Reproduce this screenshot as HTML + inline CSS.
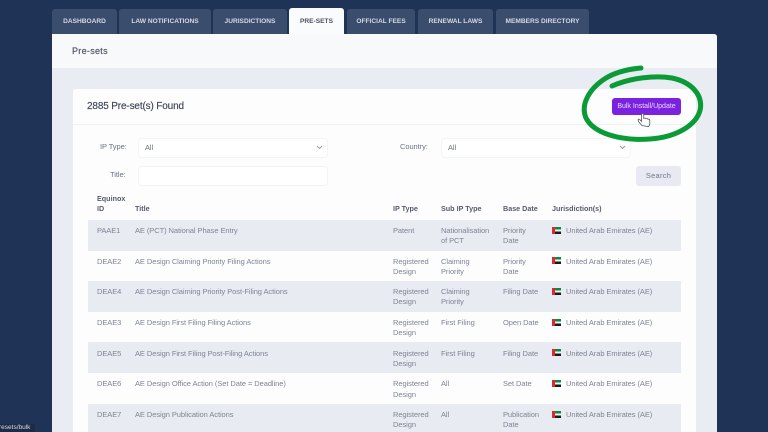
<!DOCTYPE html>
<html><head><meta charset="utf-8"><style>
html,body{margin:0;padding:0}
body{width:768px;height:432px;overflow:hidden;background:#1f3357;position:relative;font-family:"Liberation Sans",sans-serif}
#w{position:absolute;left:0;top:0;width:768px;height:432px;filter:blur(.25px)}
.a{position:absolute;white-space:nowrap}
.tab{position:absolute;top:9px;height:25px;background:#3a4d6d;border-radius:3px 3px 0 0;color:#d4d9e2;font-weight:700;font-size:6.6px;line-height:25px;text-align:center}
.t{position:absolute;white-space:nowrap;font-size:7.5px;line-height:10px;color:#7d8494;letter-spacing:-.07px;margin-top:1px}
.h{position:absolute;white-space:nowrap;font-size:7.2px;line-height:10px;color:#565c6e;font-weight:700;margin-top:1px}
.r{position:absolute;left:88px;width:593px;background:#e9ebf2}
.f{position:absolute;left:552px;width:9px;height:7px;background:linear-gradient(#0a8a40 0 33%,#f5f5f5 33% 66%,#1a1a1a 66%)}
.f:before{content:"";position:absolute;left:0;top:0;width:3px;height:7px;background:#e0262e}
.inp{position:absolute;height:18px;border:1px solid #f3f4f7;border-radius:4px;background:#fff}
</style></head><body><div id="w">
<div class="tab" style="left:52px;width:65px">DASHBOARD</div>
<div class="tab" style="left:119px;width:92px">LAW NOTIFICATIONS</div>
<div class="tab" style="left:213px;width:74px">JURISDICTIONS</div>
<div class="tab" style="left:289px;width:55px;background:#fafbfc;color:#4b5163;top:8px;height:26px;line-height:27px">PRE-SETS</div>
<div class="tab" style="left:347px;width:68px">OFFICIAL FEES</div>
<div class="tab" style="left:418px;width:75px">RENEWAL LAWS</div>
<div class="tab" style="left:496px;width:93px">MEMBERS DIRECTORY</div>

<div class="a" style="left:52px;top:34px;width:665px;height:398px;background:#eaecf3;border-radius:0 3px 0 0"></div>
<div class="a" style="left:52px;top:34px;width:665px;height:34px;background:#f8f9fb;border-radius:0 3px 0 0"></div>
<div class="a" style="left:72px;top:46px;font-size:9px;line-height:10px;color:#4e5466;font-weight:400;letter-spacing:.3px;-webkit-text-stroke:.15px #4e5466">Pre-sets</div>
<div class="a" style="left:73px;top:89px;width:623px;height:343px;background:#fdfdfe;border-radius:3px 3px 0 0"></div>
<div class="a" style="left:73px;top:124px;width:623px;height:1px;background:#f0f1f5"></div>
<div class="a" style="left:87px;top:101px;font-size:10px;line-height:12px;color:#3f4557;letter-spacing:-.15px;-webkit-text-stroke:.15px #3f4557">2885 Pre-set(s) Found</div>
<div class="a" style="left:612px;top:98px;width:69px;height:17px;background:#7a22e0;border-radius:3px;color:#e9dcfb;font-size:7px;line-height:17px;text-align:center">Bulk Install/Update</div>

<div class="t" style="left:100px;top:141px;color:#6d7383">IP Type:</div>
<div class="inp" style="left:138px;top:138px;width:188px"></div>
<div class="t" style="left:145px;top:142px;color:#6d7383">All</div>
<svg class="a" style="left:316px;top:145px" width="7" height="5" viewBox="0 0 7 5"><path d="M1 1l2.5 2.5L6 1" fill="none" stroke="#9a9fab" stroke-width="1"/></svg>
<div class="t" style="left:400px;top:141px;color:#6d7383">Country:</div>
<div class="inp" style="left:441px;top:138px;width:188px"></div>
<div class="t" style="left:448px;top:142px;color:#6d7383">All</div>
<svg class="a" style="left:619px;top:145px" width="7" height="5" viewBox="0 0 7 5"><path d="M1 1l2.5 2.5L6 1" fill="none" stroke="#9a9fab" stroke-width="1"/></svg>
<div class="t" style="left:110px;top:169px;color:#6d7383">Title:</div>
<div class="inp" style="left:138px;top:166px;width:188px"></div>
<div class="a" style="left:636px;top:166px;width:45px;height:20px;background:#e8e9f2;border-radius:3px;color:#71748c;font-size:7.5px;line-height:20px;text-align:center;letter-spacing:.25px">Search</div>

<div class="h" style="left:97px;top:193px">Equinox</div>
<div class="h" style="left:97px;top:203px">ID</div>
<div class="h" style="left:135px;top:203px">Title</div>
<div class="h" style="left:393px;top:203px">IP Type</div>
<div class="h" style="left:441px;top:203px">Sub IP Type</div>
<div class="h" style="left:503px;top:203px">Base Date</div>
<div class="h" style="left:552px;top:203px">Jurisdiction(s)</div>

<div class="r" style="top:220px;height:31px"></div>
<div class="r" style="top:281px;height:31px"></div>
<div class="r" style="top:342px;height:31px"></div>
<div class="r" style="top:404px;height:28px"></div>

<div class="t" style="left:97px;top:225px">PAAE1</div><div class="t" style="left:135px;top:225px">AE (PCT) National Phase Entry</div><div class="t" style="left:393px;top:225px">Patent</div><div class="t" style="left:441px;top:225px">Nationalisation</div><div class="t" style="left:441px;top:235px">of PCT</div><div class="t" style="left:503px;top:225px">Priority</div><div class="t" style="left:503px;top:235px">Date</div><div class="f" style="top:227px"></div><div class="t" style="left:566px;top:225px">United Arab Emirates (AE)</div>

<div class="t" style="left:97px;top:256px">DEAE2</div><div class="t" style="left:135px;top:256px">AE Design Claiming Priority Filing Actions</div><div class="t" style="left:393px;top:256px">Registered</div><div class="t" style="left:393px;top:266px">Design</div><div class="t" style="left:441px;top:256px">Claiming</div><div class="t" style="left:441px;top:266px">Priority</div><div class="t" style="left:503px;top:256px">Priority</div><div class="t" style="left:503px;top:266px">Date</div><div class="f" style="top:257px"></div><div class="t" style="left:566px;top:256px">United Arab Emirates (AE)</div>

<div class="t" style="left:97px;top:286px">DEAE4</div><div class="t" style="left:135px;top:286px">AE Design Claiming Priority Post-Filing Actions</div><div class="t" style="left:393px;top:286px">Registered</div><div class="t" style="left:393px;top:296px">Design</div><div class="t" style="left:441px;top:286px">Claiming</div><div class="t" style="left:441px;top:296px">Priority</div><div class="t" style="left:503px;top:286px">Filing Date</div><div class="f" style="top:288px"></div><div class="t" style="left:566px;top:286px">United Arab Emirates (AE)</div>

<div class="t" style="left:97px;top:317px">DEAE3</div><div class="t" style="left:135px;top:317px">AE Design First Filing Filing Actions</div><div class="t" style="left:393px;top:317px">Registered</div><div class="t" style="left:393px;top:327px">Design</div><div class="t" style="left:441px;top:317px">First Filing</div><div class="t" style="left:503px;top:317px">Open Date</div><div class="f" style="top:319px"></div><div class="t" style="left:566px;top:317px">United Arab Emirates (AE)</div>

<div class="t" style="left:97px;top:348px">DEAE5</div><div class="t" style="left:135px;top:348px">AE Design First Filing Post-Filing Actions</div><div class="t" style="left:393px;top:348px">Registered</div><div class="t" style="left:393px;top:358px">Design</div><div class="t" style="left:441px;top:348px">First Filing</div><div class="t" style="left:503px;top:348px">Filing Date</div><div class="f" style="top:349px"></div><div class="t" style="left:566px;top:348px">United Arab Emirates (AE)</div>

<div class="t" style="left:97px;top:378px">DEAE6</div><div class="t" style="left:135px;top:378px">AE Design Office Action (Set Date = Deadline)</div><div class="t" style="left:393px;top:378px">Registered</div><div class="t" style="left:393px;top:389px">Design</div><div class="t" style="left:441px;top:378px">All</div><div class="t" style="left:503px;top:378px">Set Date</div><div class="f" style="top:380px"></div><div class="t" style="left:566px;top:378px">United Arab Emirates (AE)</div>

<div class="t" style="left:97px;top:409px">DEAE7</div><div class="t" style="left:135px;top:409px">AE Design Publication Actions</div><div class="t" style="left:393px;top:409px">Registered</div><div class="t" style="left:393px;top:419px">Design</div><div class="t" style="left:441px;top:409px">All</div><div class="t" style="left:503px;top:409px">Publication</div><div class="t" style="left:503px;top:419px">Date</div><div class="f" style="top:411px"></div><div class="t" style="left:566px;top:409px">United Arab Emirates (AE)</div>

<div class="a" style="left:0;top:424px;width:35px;height:8px;background:#1c2b47;color:#d8dce4;font-size:6.5px;line-height:8px;overflow:hidden;text-indent:-1px">resets/bulk</div>

<svg class="a" style="left:0;top:0" width="768" height="432" viewBox="0 0 768 432">
<path d="M612 86C630 78 655 75 672 78C691 82 702 94 700.500 108C698 124 678 137 650 139C622 141 594 134 586 118C580 104 590 88 606 78C616 72 630 69 641 68" fill="none" stroke="#0b9b36" stroke-width="5" stroke-linecap="round"/>
<path d="M642 125.500c-1.800-1.800-3.500-4-3.800-5c-.4-1.300 1-1.800 1.800-.8l1.500 1.800v-6.800c0-1.600 2.200-1.600 2.200 0v3.600c1-.6 2-.2 2.200.4c.9-.5 1.900-.1 2.100.6c1-.4 1.800.2 1.800 1v3c0 1.600-.6 2.700-1.300 3.400z" fill="#fff" stroke="#555a66" stroke-width=".8"/>
</svg>
</div></body></html>
